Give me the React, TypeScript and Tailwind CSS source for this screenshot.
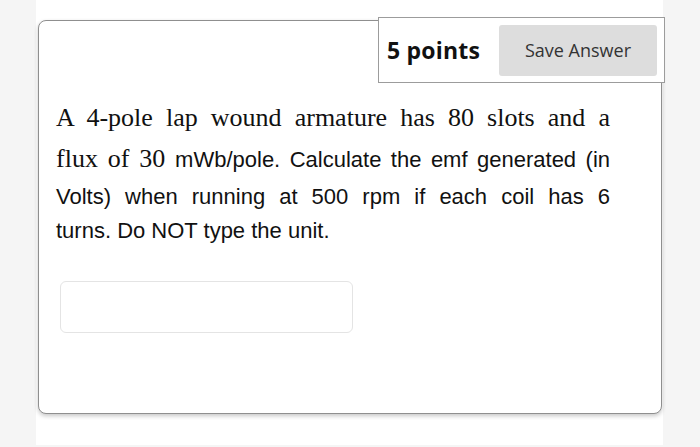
import React from 'react'

const serif = { fontFamily: '"Liberation Serif", "Times New Roman", serif' }

export default function App() {
  return (
    <div className="h-[447px] w-[700px] bg-[#f5f5f5] overflow-hidden">
      <div className="ml-[36px] w-[627px] h-[445px] bg-white pt-[20px]">
        <div className="relative ml-[2px] w-[624px] h-[394px] rounded-[8px] border border-[#8f8f8f] bg-white shadow-[0_2px_4px_rgba(0,0,0,0.22)]">
          {/* points + save */}
          <div className="absolute -top-[4px] -right-[4px] flex items-center w-[287px] h-[66px] border border-[#9c9c9c] bg-white pl-[8px] pr-[7px] font-['Open_Sans',sans-serif]">
            <span className="text-[23px] font-bold text-[#111] tracking-[0.2px]">5 points</span>
            <button className="ml-auto h-[51px] w-[158px] rounded-[3px] bg-[#dddddd] text-[18px] text-[#333]">
              Save Answer
            </button>
          </div>

          <div className="pl-[17px] pt-[79px] w-[571px] text-[#111] font-['Liberation_Sans',Arial,sans-serif]">
            <div
              className="h-[41px] text-[26px] leading-[36px] text-justify [text-align-last:justify]"
              style={serif}
            >
              A 4-pole lap wound armature has 80 slots and a
            </div>
            <div
              className="h-[39px] text-[26px] leading-[36px] text-justify [text-align-last:justify]"
              style={serif}
            >
              flux of 30{' '}
              <span className="text-[22px] font-['Liberation_Sans',Arial,sans-serif]">
                mWb/pole. Calculate the emf generated (in
              </span>
            </div>
            <div className="h-[34px] text-[22px] leading-[34px] text-justify [text-align-last:justify]">
              Volts) when running at 500 rpm if each coil has 6
            </div>
            <div className="h-[34px] text-[22px] leading-[34px]">turns. Do NOT type the unit.</div>

            <input
              type="text"
              className="mt-[33px] ml-[4px] block h-[52px] w-[293px] rounded-[6px] border-[1.5px] border-[#e4e4e4] bg-white outline-none"
            />
          </div>
        </div>
      </div>
    </div>
  )
}
